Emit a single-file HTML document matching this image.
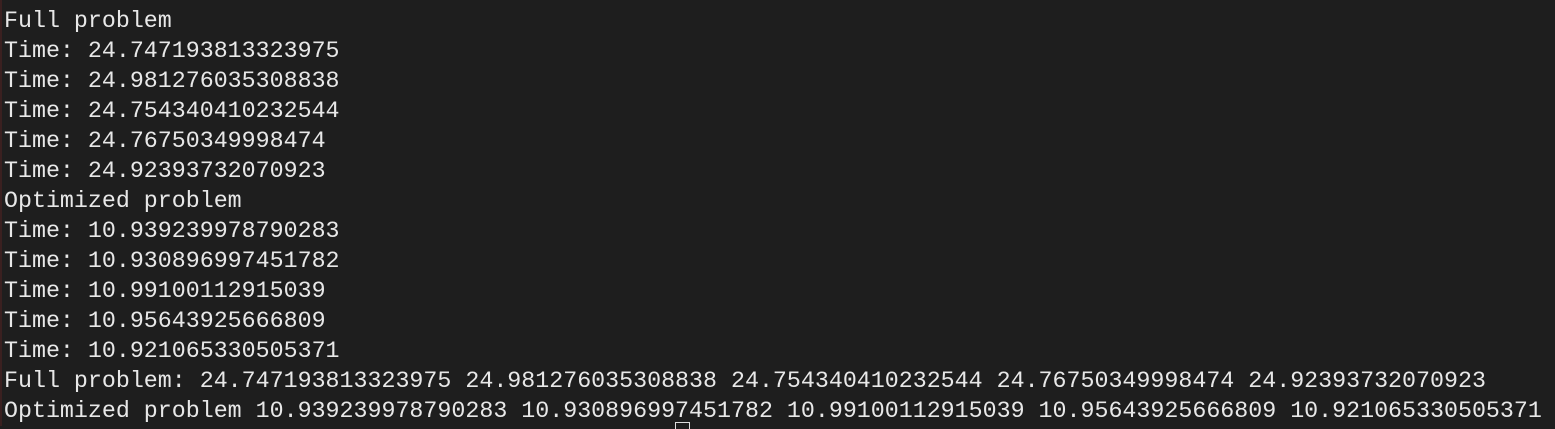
<!DOCTYPE html>
<html><head><style>
html,body{margin:0;padding:0;background:#1e1e1e;width:1555px;height:426px;overflow:hidden}
.t{position:absolute;left:4px;top:6px;font-family:"Liberation Mono",monospace;font-size:23.3px;line-height:30px;color:#e8e8e8;white-space:pre}
.edge{position:absolute;left:0;top:0;width:2px;height:426px;background:#3a2020}
.cur{position:absolute;left:675px;top:422px;width:13px;height:6px;border:1px solid #ddd;border-bottom:none}
</style></head><body>
<div class="edge"></div>
<div class="t">Full problem
Time: 24.747193813323975
Time: 24.981276035308838
Time: 24.754340410232544
Time: 24.76750349998474
Time: 24.92393732070923
Optimized problem
Time: 10.939239978790283
Time: 10.930896997451782
Time: 10.99100112915039
Time: 10.95643925666809
Time: 10.921065330505371
Full problem: 24.747193813323975 24.981276035308838 24.754340410232544 24.76750349998474 24.92393732070923
Optimized problem 10.939239978790283 10.930896997451782 10.99100112915039 10.95643925666809 10.921065330505371</div>
<div class="cur"></div>
</body></html>
